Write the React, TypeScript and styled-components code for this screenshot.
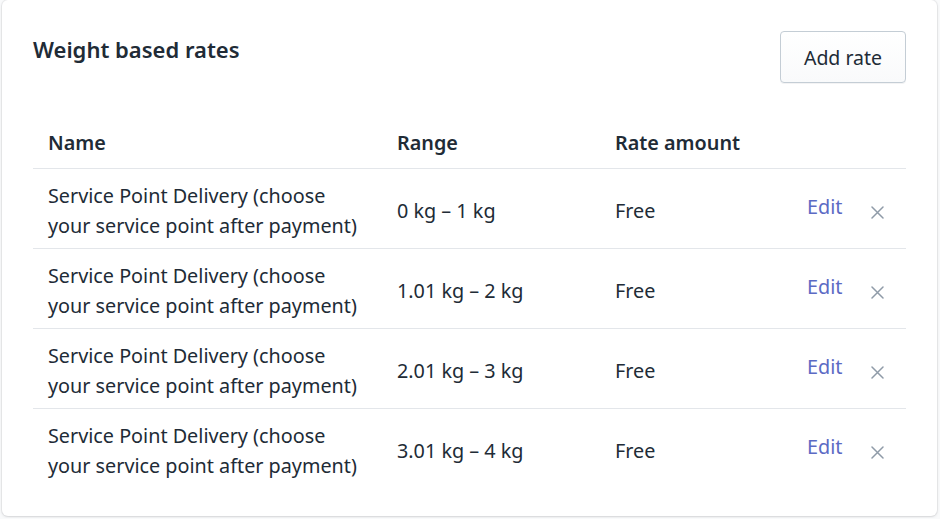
import React from 'react';
import styled, { createGlobalStyle } from 'styled-components';

interface IRate {
  id: number;
  name: string;
  range: string;
  amount: string;
}

const rates: IRate[] = [
  { id: 1, name: 'Service Point Delivery (choose your service point after payment)', range: '0 kg – 1 kg', amount: 'Free' },
  { id: 2, name: 'Service Point Delivery (choose your service point after payment)', range: '1.01 kg – 2 kg', amount: 'Free' },
  { id: 3, name: 'Service Point Delivery (choose your service point after payment)', range: '2.01 kg – 3 kg', amount: 'Free' },
  { id: 4, name: 'Service Point Delivery (choose your service point after payment)', range: '3.01 kg – 4 kg', amount: 'Free' },
];

const GlobalStyle = createGlobalStyle`
  html, body {
    margin: 0;
    padding: 0;
    background: #f9fafb;
  }
  body {
    font-family: "Noto Sans", "Open Sans", sans-serif;
    color: #212b36;
  }
`;

const Card = styled.section`
  box-sizing: border-box;
  width: 935px;
  margin: 0 0 2px 2px;
  padding: 31px 31px 28px;
  background: #fff;
  border-radius: 6px;
  box-shadow: 0 0 0 1px rgba(63, 63, 68, 0.06), 0 1px 3px 0 rgba(63, 63, 68, 0.15);
`;

const Header = styled.div`
  display: flex;
  justify-content: space-between;
  align-items: flex-start;
`;

const Title = styled.h2`
  margin: 3px 0 0;
  font-size: 22px;
  line-height: 30px;
  font-weight: 600;
`;

const Button = styled.button`
  box-sizing: border-box;
  height: 52px;
  width: 126px;
  padding: 0;
  font-family: inherit;
  font-size: 19.5px;
  color: #212b36;
  background: linear-gradient(180deg, #fff, #f9fafb);
  border: 1px solid #c4cdd5;
  border-radius: 4px;
  box-shadow: 0 1px 0 0 rgba(22, 29, 37, 0.05);
  cursor: pointer;
`;

const Table = styled.table`
  width: 100%;
  margin-top: 34px;
  border-collapse: collapse;
  table-layout: fixed;
  font-size: 19.8px;
  line-height: 30px;
`;

const Th = styled.th<{ $width?: number }>`
  box-sizing: border-box;
  width: ${(p) => (p.$width ? `${p.$width}px` : 'auto')};
  padding: 11px 15px 10px;
  text-align: left;
  font-weight: 600;
  border-bottom: 1px solid #e3e6ea;
`;

const Row = styled.tr`
  & + & td {
    border-top: 1px solid #e3e6ea;
  }
`;

const Td = styled.td`
  box-sizing: border-box;
  padding: 12px 15px 7px;
  vertical-align: middle;
`;

const EditLink = styled.button`
  padding: 0 0 8px;
  border: 0;
  background: none;
  font-family: inherit;
  font-size: inherit;
  line-height: 30px;
  color: #5c6ac4;
  cursor: pointer;
`;

const RemoveButton = styled.button`
  display: flex;
  align-items: center;
  padding: 3px 0 0;
  border: 0;
  background: none;
  color: #8f9ba8;
  cursor: pointer;
`;

const CloseIcon = () => (
  <svg width="13" height="13" viewBox="0 0 13 13" fill="none">
    <path d="M1 1L12 12M12 1L1 12" stroke="currentColor" strokeWidth="1.5" strokeLinecap="round" />
  </svg>
);

export default function App() {
  return (
    <>
      <GlobalStyle />
      <Card>
        <Header>
          <Title>Weight based rates</Title>
          <Button>Add rate</Button>
        </Header>
        <Table>
          <thead>
            <tr>
              <Th $width={349}>Name</Th>
              <Th $width={218}>Range</Th>
              <Th $width={192}>Rate amount</Th>
              <Th $width={64} />
              <Th />
            </tr>
          </thead>
          <tbody>
            {rates.map((rate) => (
              <Row key={rate.id}>
                <Td>{rate.name}</Td>
                <Td>{rate.range}</Td>
                <Td>{rate.amount}</Td>
                <Td>
                  <EditLink>Edit</EditLink>
                </Td>
                <Td>
                  <RemoveButton aria-label="Remove">
                    <CloseIcon />
                  </RemoveButton>
                </Td>
              </Row>
            ))}
          </tbody>
        </Table>
      </Card>
    </>
  );
}
